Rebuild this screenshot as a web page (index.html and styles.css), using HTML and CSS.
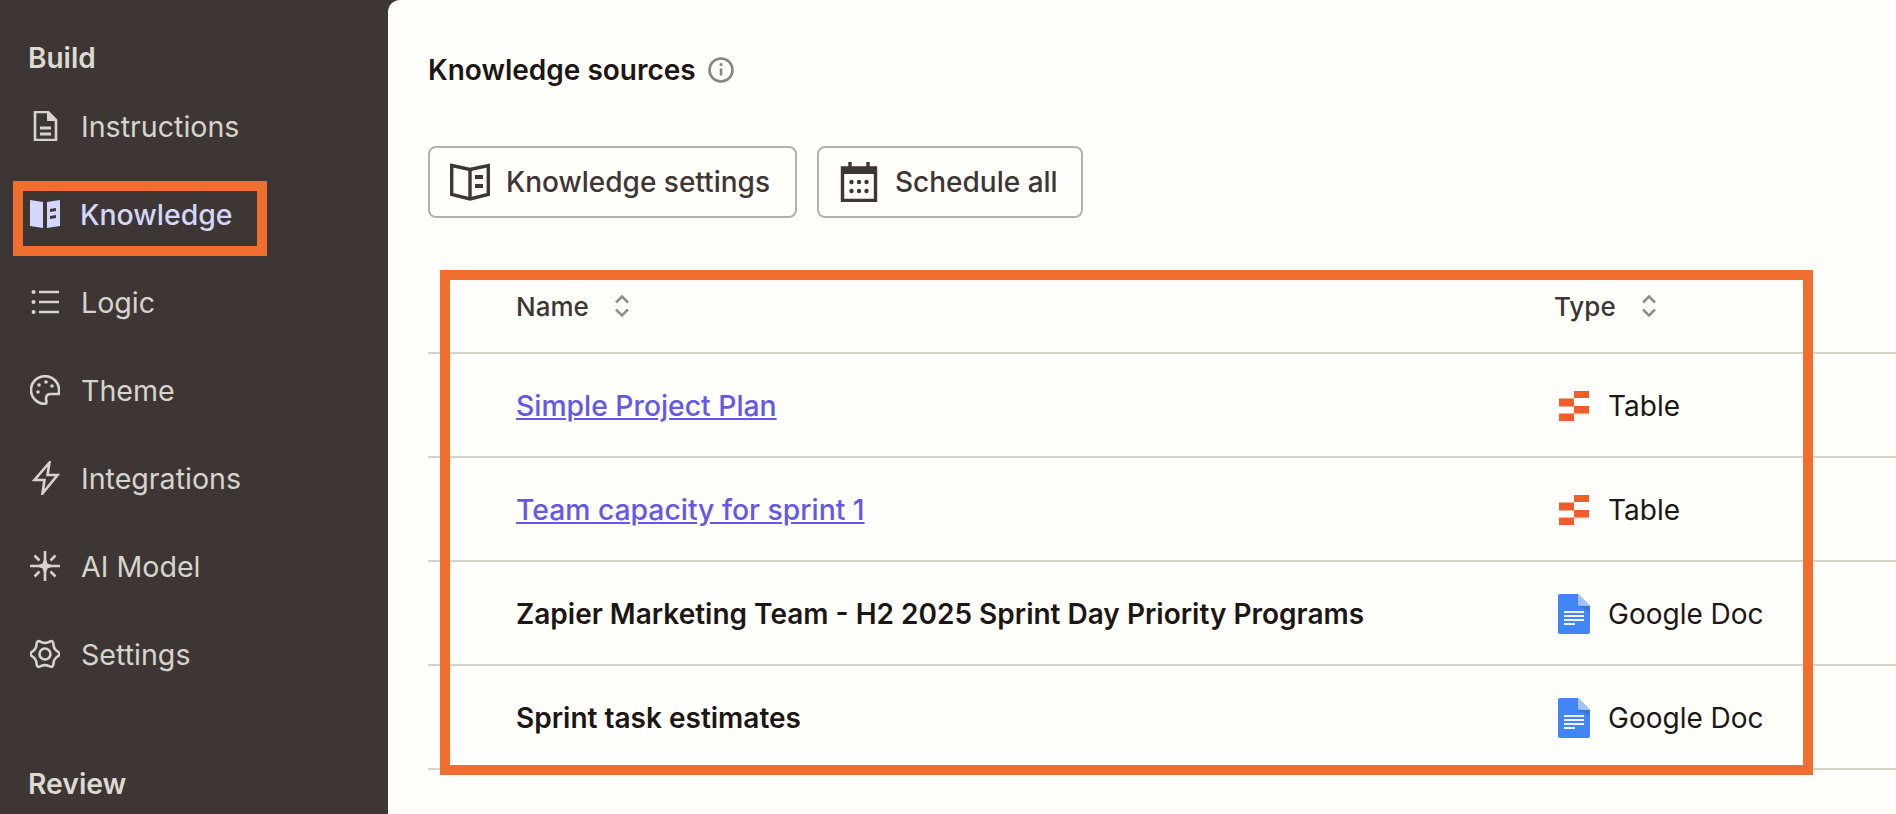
FILE: index.html
```html
<!DOCTYPE html>
<html lang="en">
<head>
<meta charset="utf-8">
<title>Knowledge</title>
<link rel="stylesheet" href="styles.css">
</head>
<body>
<svg class="defs" width="0" height="0" aria-hidden="true">
  <symbol id="tbl" viewBox="0 0 30 30"><path fill="#f15c2c" d="M15 0h15v7H15zM0 8h15v7.500H0zM15 15h15v7.500H15zM0 23h15v7H0z"/><path fill="#f9b39b" d="M0 7h15v1H0zM15 22.500h15v1H15zM0 22h15v1H0z"/></symbol>
  <symbol id="gdoc" viewBox="0 0 32 40"><path fill="#4285f4" d="M2 0h18l12 12v26a2 2 0 0 1-2 2H2a2 2 0 0 1-2-2V2a2 2 0 0 1 2-2z"/><path fill="#a1c2fa" d="M20 0l12 12H22a2 2 0 0 1-2-2z"/><path fill="#3a6fd0" d="M20 12h12v6z" opacity=".8"/><path fill="#f1f1f1" d="M6 17h20v2H6zM6 21h20v2H6zM6 25h20v2H6zM6 29h11v2H6z"/></symbol>
  <symbol id="sort" viewBox="0 0 16 24"><path fill="none" stroke="#8f8e88" stroke-width="2.500" d="M2 8.500L8 2.500l6 6M2 15.500l6 6 6-6"/></symbol>
</svg>
<div class="app">
  <aside class="side">
    <div class="head">Build</div>
    <nav class="nav">
      <a class="item"><svg class="ic" viewBox="0 0 30 30" fill="none" stroke="currentColor" stroke-width="2.600"><path d="M5 1h13l8 8v20H5z"/><path d="M17 1h2l7 7v2h-9z" fill="currentColor" stroke="none"/><path d="M10 17h11M10 23h11" stroke-width="3"/></svg><span>Instructions</span></a>
      <a class="item on"><svg class="ic" viewBox="0 0 30 30" fill="currentColor"><path d="M0 1l13 2v26L0 27z"/><path fill-rule="evenodd" d="M17 3l13-2v26l-13 2zM20 10v3l6-1V9zM20 17v3l6-1v-3z"/></svg><span>Knowledge</span></a>
      <a class="item"><svg class="ic" viewBox="0 0 30 30" fill="none" stroke="currentColor" stroke-width="2.600"><path d="M9 5h20M9 15h20M9 25h20"/><path stroke-width="4" stroke-linecap="round" d="M3.500 5h.1M3.500 15h.1M3.500 25h.1"/></svg><span>Logic</span></a>
      <a class="item"><svg class="ic" viewBox="0 0 30 30" fill="none" stroke="currentColor" stroke-width="2.600"><path d="M29 19H21c-3.500 0-5 2-5 4.500 0 1.500.5 2.500.5 3.500 0 1-.5 1.800-1.500 1.800C7 28.800 1 22.500 1 15S7 1.200 15 1.200 29 7.500 29 15z"/><g fill="currentColor" stroke="none"><circle cx="9" cy="10" r="1.800"/><circle cx="16" cy="7" r="1.800"/><circle cx="22" cy="11" r="1.800"/><circle cx="8" cy="17" r="1.800"/></g></svg><span>Theme</span></a>
      <a class="item"><svg class="ic ic-tall" viewBox="0 0 30 34" fill="none" stroke="currentColor" stroke-width="2.600" stroke-miterlimit="8"><path d="M19.500 1.500L4.500 19h10L12.500 32.500 27.500 14h-10z"/></svg><span>Integrations</span></a>
      <a class="item"><svg class="ic" viewBox="0 0 30 30" fill="none" stroke="currentColor" stroke-width="2.600"><path fill="currentColor" stroke="none" d="M15 6l2.500 6.500L24 15l-6.500 2.500L15 24l-2.500-6.500L6 15l6.500-2.500z"/><path d="M15 0v30M0 15h30M4.500 4.500l5 5M25.500 4.500l-5 5M4.500 25.500l5-5M25.500 25.500l-5-5"/></svg><span>AI Model</span></a>
      <a class="item"><svg class="ic" viewBox="0 0 30 30" fill="none" stroke="currentColor" stroke-width="2.600" stroke-linejoin="round"><circle cx="15" cy="15" r="5.500"/><path d="M27.580 12.500Q31.500 15 27.580 17.500 23.660 20 23.450 24.650 23.250 29.300 19.120 27.150 15 25 10.880 27.150 6.750 29.300 6.550 24.650 6.340 20 2.420 17.500-1.500 15 2.420 12.500 6.340 10 6.550 5.350 6.750 .7 10.880 2.850 15 5 19.120 2.850 23.250 .7 23.450 5.350 23.660 10 27.580 12.500z"/></svg><span>Settings</span></a>
    </nav>
    <div class="head review">Review</div>
    <div class="mark mark-nav"></div>
  </aside>
  <main class="main">
    <h1 class="title">Knowledge sources <svg class="info" viewBox="0 0 26 26" fill="none" stroke="#86857f" stroke-width="2.600"><circle cx="13" cy="13" r="11.500"/><path d="M13 11.500v7"/><path stroke-width="3" stroke-linecap="round" d="M13 7.500h.1"/></svg></h1>
    <div class="btns">
      <button class="btn"><svg class="bi" viewBox="0 0 40 40" fill="none" stroke="#3d3635" stroke-width="3.400"><path d="M1.700 3.500L20 7.500l18.300-4v29L20 37 1.700 32.500zM20 7.500V37"/><path d="M25 15h8M25 24h8" stroke-width="3.800"/></svg>Knowledge settings</button>
      <button class="btn btn-sched"><svg class="bi" viewBox="0 0 40 40" fill="none" stroke="#3d3635" stroke-width="3.400"><path d="M3.500 6h33v32.500h-33z"/><path d="M3.500 9h33" stroke-width="6"/><path d="M11 0v8M29 0v8"/><g fill="#3d3635" stroke="none"><circle cx="12.500" cy="20" r="2.200"/><circle cx="20" cy="20" r="2.200"/><circle cx="27.500" cy="20" r="2.200"/><circle cx="12.500" cy="29" r="2.200"/><circle cx="20" cy="29" r="2.200"/><circle cx="27.500" cy="29" r="2.200"/></g></svg>Schedule all</button>
    </div>
    <div class="table">
      <div class="row hdr">
        <div class="name"><span>Name</span><svg class="sort"><use href="#sort"/></svg></div>
        <div class="type"><span>Type</span><svg class="sort"><use href="#sort"/></svg></div>
      </div>
      <div class="row">
        <div class="name"><a class="link">Simple Project Plan</a></div>
        <div class="type"><svg class="t-tbl"><use href="#tbl"/></svg><span>Table</span></div>
      </div>
      <div class="row">
        <div class="name"><a class="link">Team capacity for sprint 1</a></div>
        <div class="type"><svg class="t-tbl"><use href="#tbl"/></svg><span>Table</span></div>
      </div>
      <div class="row">
        <div class="name strong">Zapier Marketing Team - H2 2025 Sprint Day Priority Programs</div>
        <div class="type"><svg class="t-doc"><use href="#gdoc"/></svg><span>Google Doc</span></div>
      </div>
      <div class="row">
        <div class="name strong">Sprint task estimates</div>
        <div class="type"><svg class="t-doc"><use href="#gdoc"/></svg><span>Google Doc</span></div>
      </div>
      <div class="mark mark-table"></div>
    </div>
  </main>
</div>
</body>
</html>
```

FILE: styles.css
```css
* { box-sizing: border-box; }
html, body { margin: 0; height: 100%; overflow: hidden; }
body { background: #3d3635; font-family: Inter, "Liberation Sans", sans-serif; color: #1c1715; }
.defs { position: absolute; }
.app { display: flex; height: 814px; }
.side { position: relative; width: 388px; flex: none; padding-left: 28px; color: #dcdad2; }
.head { font-size: 28px; font-weight: 600; line-height: 32px; padding-top: 42px; }
.nav { display: flex; flex-direction: column; padding-top: 8px; }
.item { height: 88px; display: flex; align-items: center; gap: 21px; font-size: 28.6px; padding-left: 2px; color: #d6d4cc; }
.ic { width: 30px; height: 30px; flex: none; }
.ic-tall { height: 34px; }
.item.on { color: #d3d7fb; font-weight: 500; font-size: 28.4px; gap: 20px; }
.review { padding-top: 70px; font-size: 28.3px; }
.mark { position: absolute; border: 10px solid #f16f2e; pointer-events: none; }
.mark-nav { left: 13px; top: 181px; width: 254px; height: 75px; }
.main { flex: 1; background: #fffefb; border-top-left-radius: 12px; padding: 50px 0 0 40px; }
.title { margin: 0; font-size: 28px; font-weight: 600; line-height: 40px; display: flex; align-items: center; gap: 12px; letter-spacing: 0; }
.info { width: 26px; height: 26px; }
.btns { display: flex; gap: 20px; margin-top: 56px; }
.btn { height: 72px; display: flex; align-items: center; gap: 16px; padding: 0 25px 0 20px; background: none; border: 2px solid #b3b2aa; border-radius: 8px; font: 500 28px Inter, sans-serif; color: #3d3635; }
.btn-sched { padding-right: 23px; }
.bi { width: 40px; height: 40px; flex: none; }
.table { position: relative; margin-top: 32px; }
.row { height: 104px; padding-top: 2px; display: grid; grid-template-columns: 1127px 1fr; align-items: center; border-bottom: 2px solid #d5d4cb; font-size: 28px; }
.hdr { padding-top: 10px; color: #3d3635; font-weight: 500; font-size: 26px; }
.name { padding-left: 88px; display: flex; align-items: center; gap: 25px; }
.type { display: flex; align-items: center; }
.hdr .type { gap: 25px; margin-left: -1px; }
.sort { width: 16px; height: 24px; }
.link { color: #6458e6; text-decoration: underline; font-weight: 500; font-size: 28.3px; }
.strong { font-weight: 600; }
.t-tbl { width: 30px; height: 30px; margin: 0 19px 0 4px; }
.t-doc { width: 32px; height: 40px; margin: 0 18px 0 3px; }
.mark-table { left: 12px; top: 20px; width: 1373px; height: 505px; }
```
